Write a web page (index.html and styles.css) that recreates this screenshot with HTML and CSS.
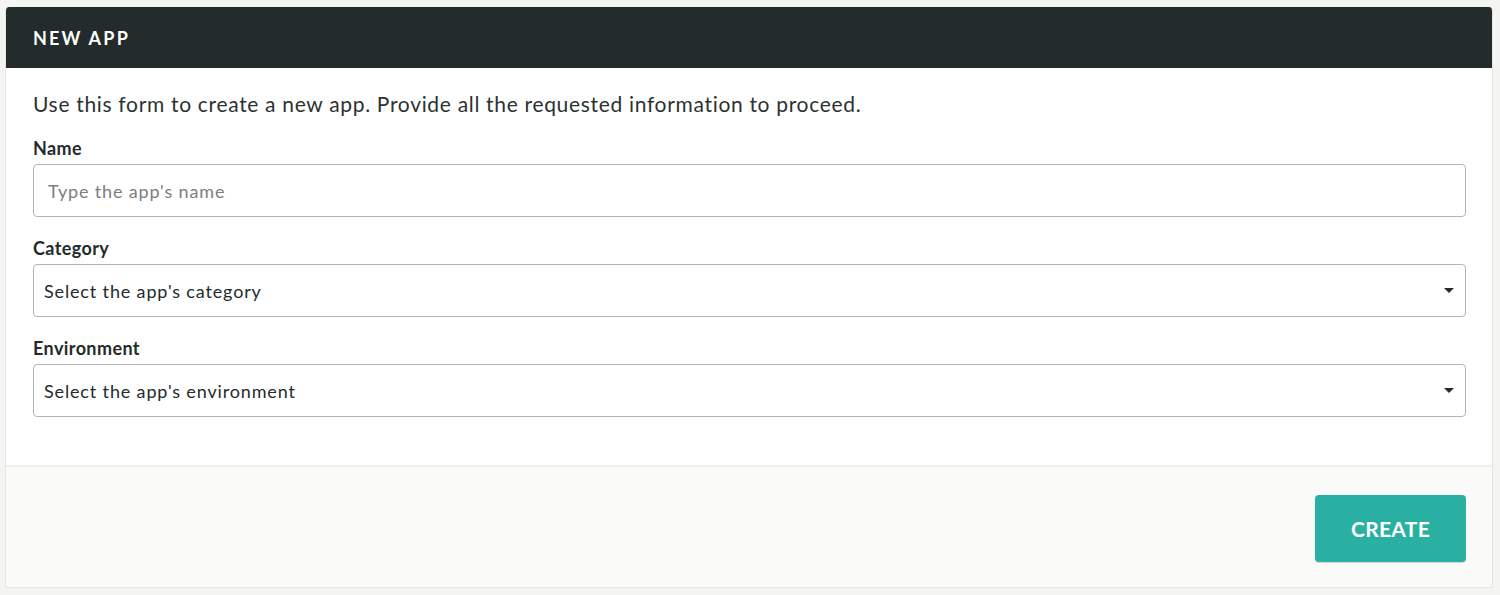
FILE: index.html
```html
<!DOCTYPE html>
<html>
<head>
<meta charset="utf-8">
<link rel="stylesheet" href="styles.css">
</head>
<body>
<div class="card">
  <div class="card-header">NEW APP</div>
  <div class="card-body">
    <p class="intro">Use this form to create a new app. Provide all the requested information to proceed.</p>
    <div class="field">
      <label class="label">Name</label>
      <div class="input"><span class="placeholder">Type the app's name</span></div>
    </div>
    <div class="field">
      <label class="label">Category</label>
      <div class="select"><span>Select the app's category</span><span class="caret"></span></div>
    </div>
    <div class="field">
      <label class="label">Environment</label>
      <div class="select"><span>Select the app's environment</span><span class="caret"></span></div>
    </div>
  </div>
  <div class="card-footer">
    <button class="btn">CREATE</button>
  </div>
</div>
</body>
</html>
```
FILE: styles.css
```css
* { box-sizing: border-box; }
html, body { margin: 0; padding: 0; }
body {
  background: #f4f4f2;
  font-family: Lato, "Open Sans", sans-serif;
  color: #232b2b;
  padding: 7px 7px 0 5px;
}
.card {
  background: #fff;
  border: 1px solid #e6e6e3;
  border-top: none;
  border-radius: 4px;
  box-shadow: 0 2px 0 #e8e8e5;
  overflow: hidden;
  height: 581px;
  display: flex;
  flex-direction: column;
}
.card-header {
  flex: none;
  background: #232b2b;
  color: #fff;
  height: 61px;
  display: flex;
  align-items: center;
  padding-left: 27px;
  font-weight: 700;
  font-size: 18px;
  letter-spacing: 2.2px;
}
.card-body {
  flex: none;
  padding: 23px 26px 0 27px;
  height: 399px;
  border-bottom: 2px solid #efefed;
}
.intro {
  margin: 0 0 21px 0;
  font-size: 21px;
  font-weight: 400;
  letter-spacing: 0.68px;
  color: #2b3232;
  line-height: 26px;
}
.field { margin-bottom: 21px; }
.label {
  display: block;
  font-weight: 700;
  font-size: 18px;
  letter-spacing: 0.4px;
  line-height: 20px;
  margin-bottom: 6px;
  color: #232b2b;
}
.input, .select {
  height: 53px;
  border: 1px solid #b2b5b4;
  border-radius: 4px;
  display: flex;
  align-items: center;
  font-size: 18px;
  letter-spacing: 0.85px;
}
.input { padding-left: 14px; }
.placeholder { color: #7a7f7e; }
.select {
  padding: 0 11px 0 10px;
  justify-content: space-between;
  color: #232b2b;
}
.caret {
  width: 0; height: 0;
  border-left: 5px solid transparent;
  border-right: 5px solid transparent;
  border-top: 5px solid #232b2b;
}
.card-footer {
  flex: 1;
  background: #fafaf9;
  display: flex;
  justify-content: flex-end;
  align-items: flex-start;
  padding: 28px 26px 0 0;
}
.btn {
  width: 151px;
  height: 67px;
  background: #2ab0a3;
  border: none;
  border-radius: 4px;
  color: #fff;
  font-family: Lato, sans-serif;
  font-weight: 700;
  font-size: 21px;
  letter-spacing: 0.3px;
  box-shadow: 0 1px 1px rgba(0,0,0,0.15);
}
```
